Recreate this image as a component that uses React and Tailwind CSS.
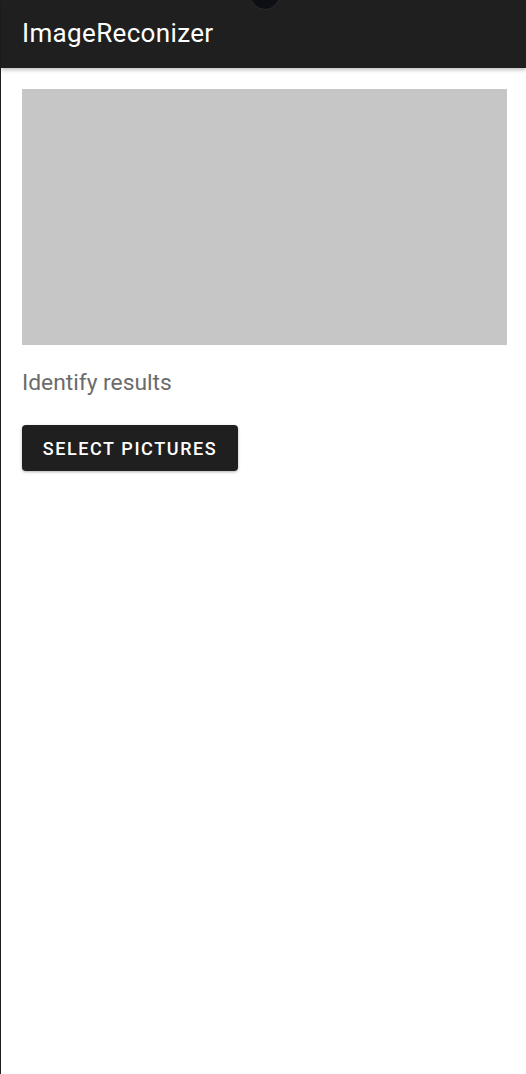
import React from "react";

export default function App() {
  return (
    <div className="relative min-h-[1074px] w-[526px] bg-white border-l border-[#1f1f1f] font-['Roboto','Liberation_Sans',sans-serif]">
      {/* app bar */}
      <header className="relative h-[68px] bg-[#1f1f1f] flex items-center px-[21px] shadow-[0_2px_4px_rgba(0,0,0,0.25)]">
        <h1 className="text-white text-[26px] font-normal tracking-[0.35px] -mt-[1px]">ImageReconizer</h1>
        {/* camera cutout */}
        <div className="absolute left-[249px] -top-[20px] w-[30px] h-[30px] rounded-full bg-[#0d0f14] border border-[#2a2c30]" />
      </header>

      <main className="px-[21px] pt-[21px]">
        <div className="h-[256px] w-[485px] bg-[#c6c6c6]" />
        <p className="mt-[24px] text-[22.8px] text-[#6b6b6b] leading-[28px]">Identify results</p>
        <button className="mt-[28px] h-[46px] w-[216px] rounded-[4px] bg-[#1f1f1f] text-white text-[18px] font-medium tracking-[1.6px] uppercase shadow-[0_1px_3px_rgba(0,0,0,0.3)]">
          Select pictures
        </button>
      </main>
    </div>
  );
}
